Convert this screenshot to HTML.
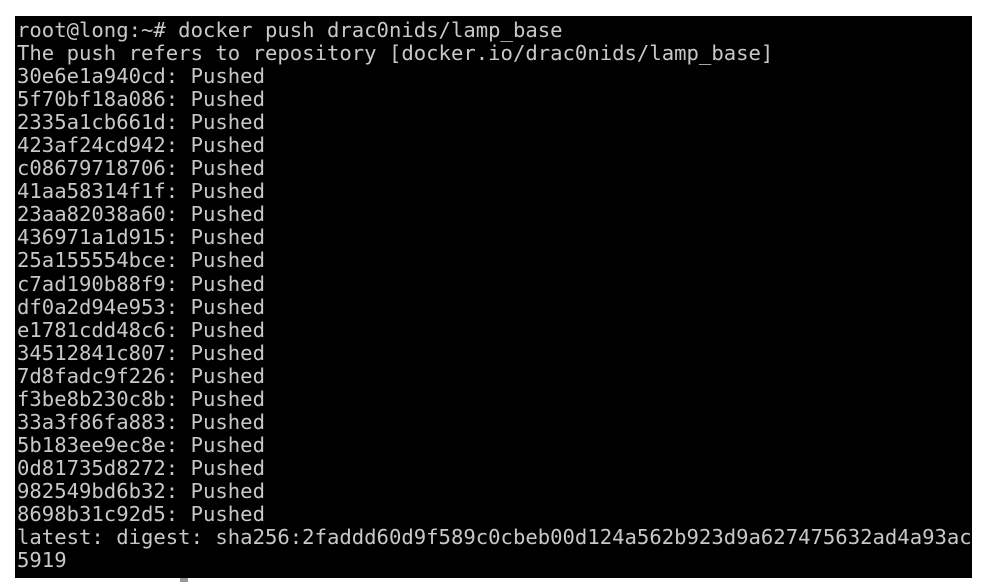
<!DOCTYPE html>
<html><head><meta charset="utf-8"><style>
html,body{margin:0;padding:0;background:#fff;width:986px;height:585px;overflow:hidden;position:relative}
.term{position:absolute;left:15px;top:16px;width:957px;height:562px;background:#000}
pre{position:absolute;left:17px;top:19px;margin:0;font-family:"DejaVu Sans Mono","Liberation Mono",monospace;font-size:20.6px;line-height:23.05px;color:#c8c8c8;white-space:pre}
.cur{position:absolute;left:180px;top:578px;width:8px;height:4px;background:#999}
</style></head><body>
<div class="term"></div>
<pre>root@long:~# docker push drac0nids/lamp_base
The push refers to repository [docker.io/drac0nids/lamp_base]
30e6e1a940cd: Pushed
5f70bf18a086: Pushed
2335a1cb661d: Pushed
423af24cd942: Pushed
c08679718706: Pushed
41aa58314f1f: Pushed
23aa82038a60: Pushed
436971a1d915: Pushed
25a155554bce: Pushed
c7ad190b88f9: Pushed
df0a2d94e953: Pushed
e1781cdd48c6: Pushed
34512841c807: Pushed
7d8fadc9f226: Pushed
f3be8b230c8b: Pushed
33a3f86fa883: Pushed
5b183ee9ec8e: Pushed
0d81735d8272: Pushed
982549bd6b32: Pushed
8698b31c92d5: Pushed
latest: digest: sha256:2faddd60d9f589c0cbeb00d124a562b923d9a627475632ad4a93ac
5919</pre>
<div class="cur"></div>
</body></html>
